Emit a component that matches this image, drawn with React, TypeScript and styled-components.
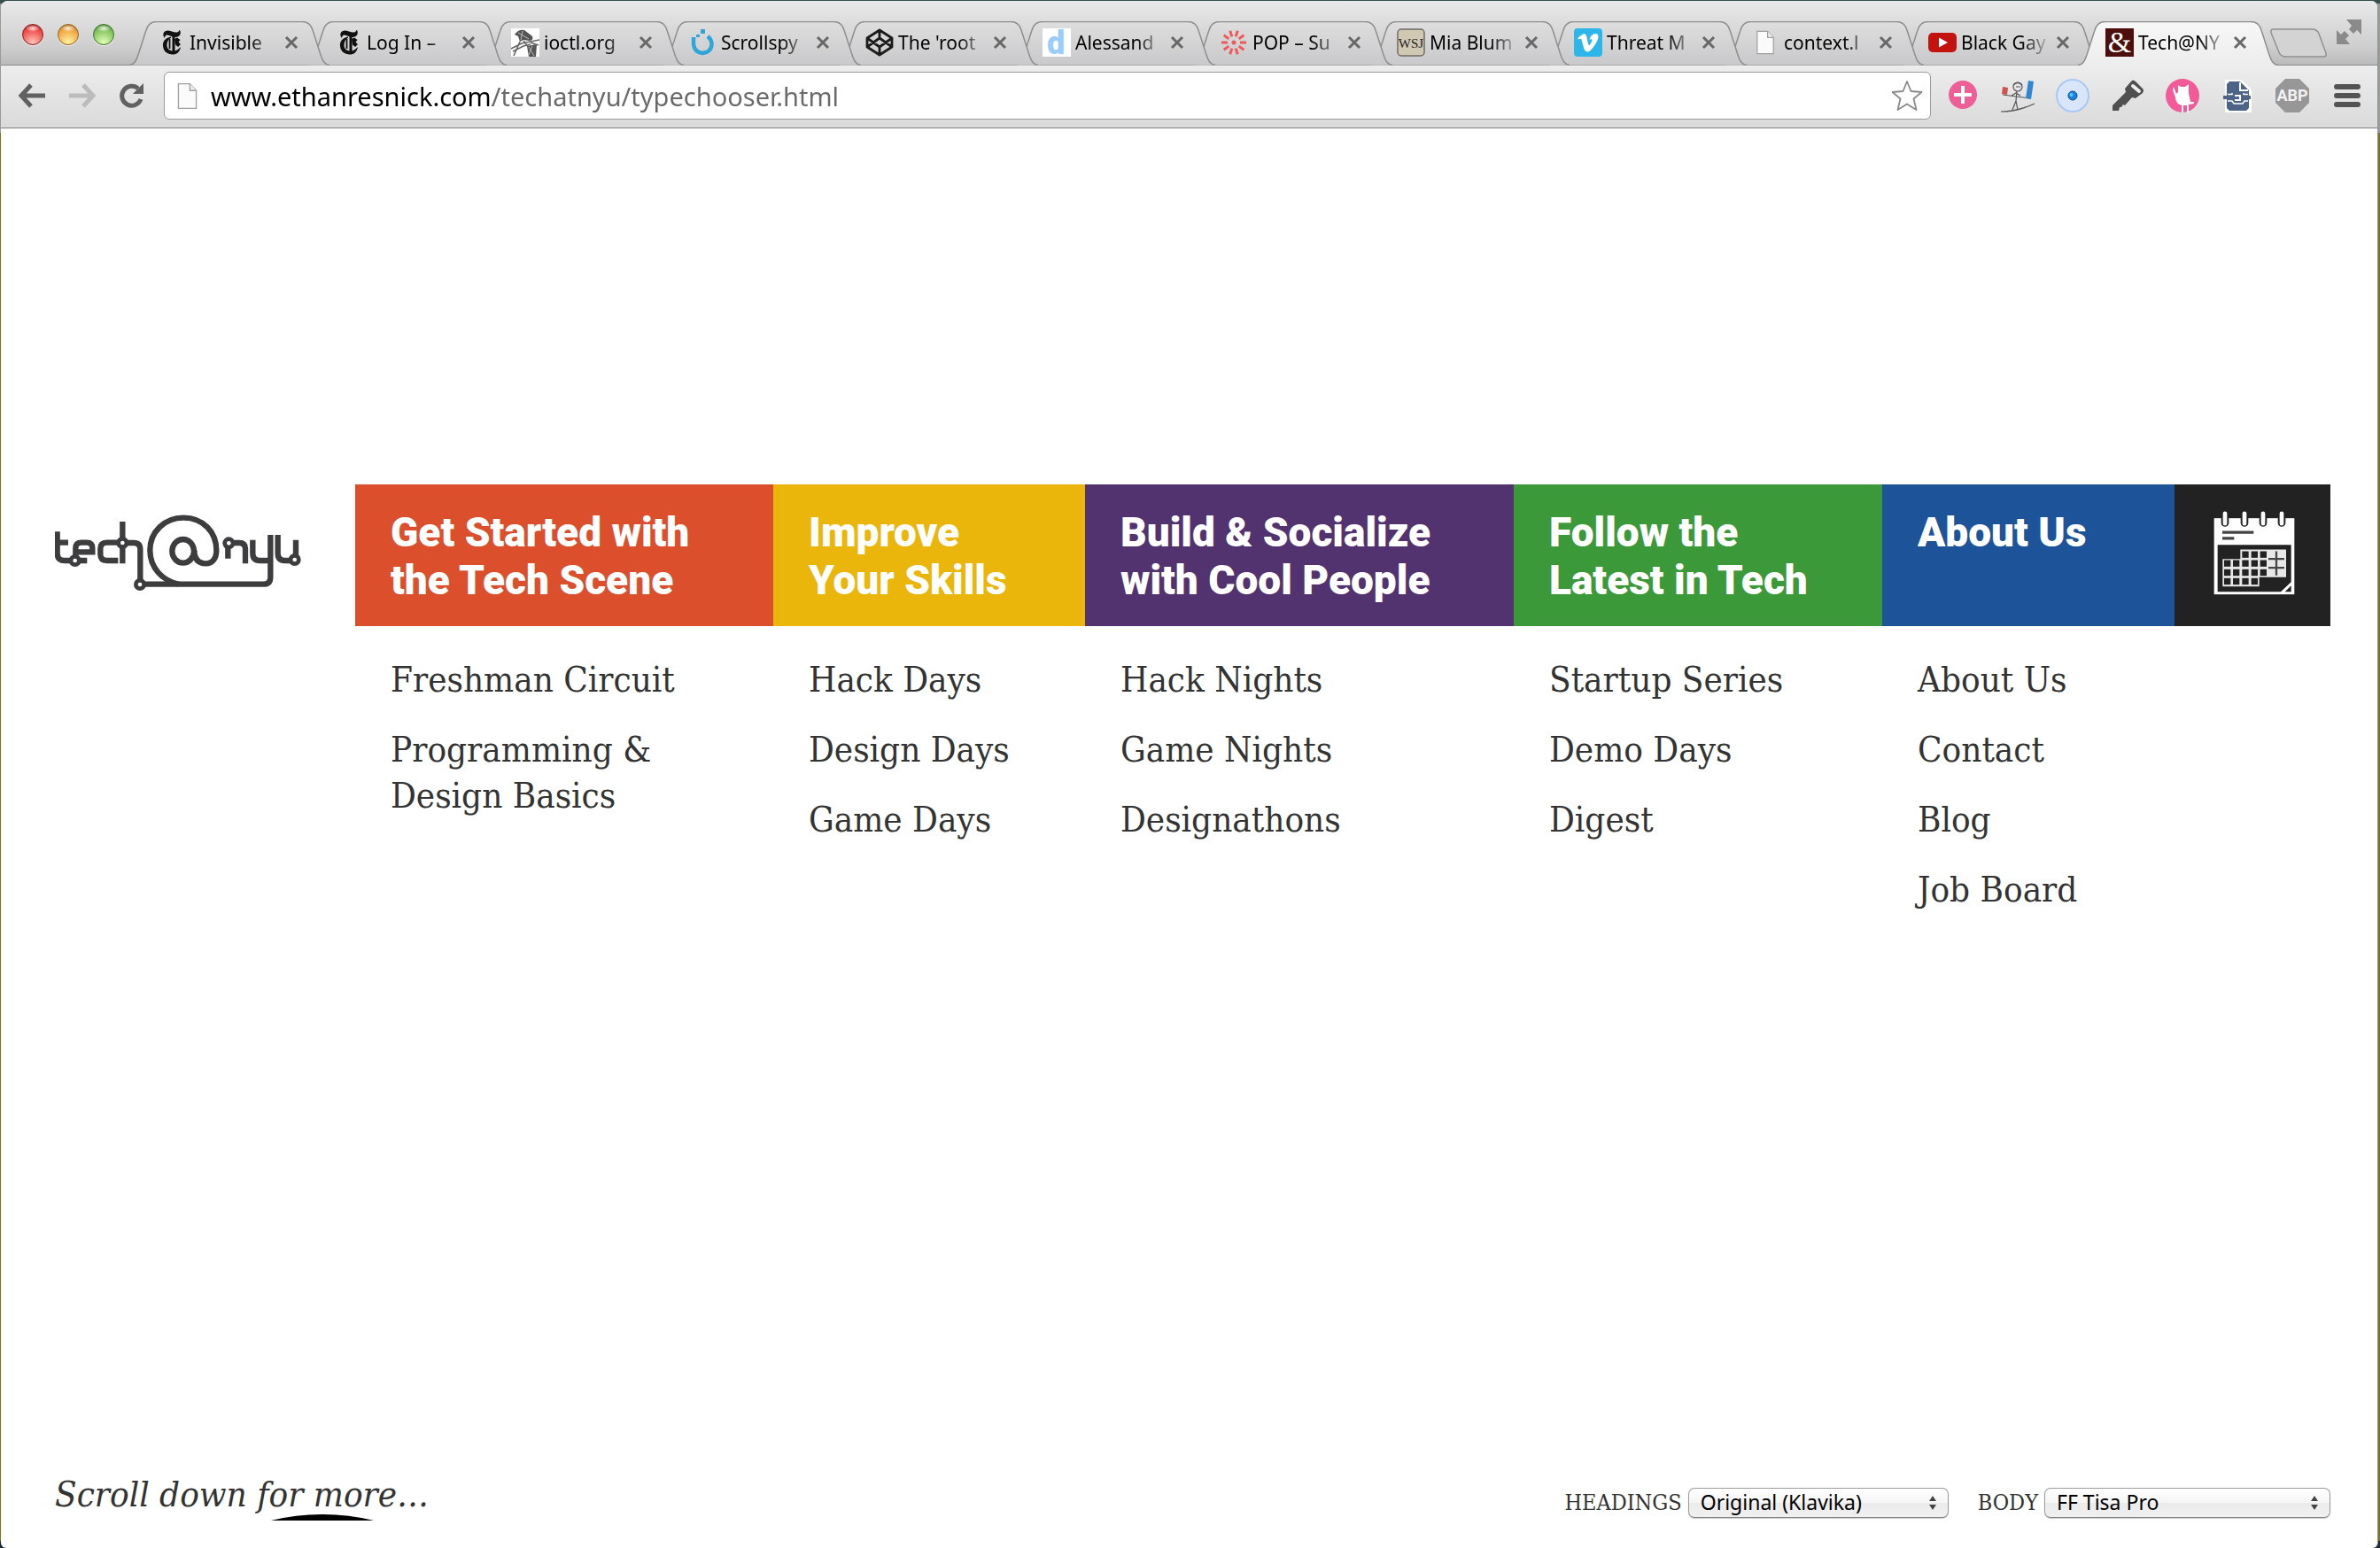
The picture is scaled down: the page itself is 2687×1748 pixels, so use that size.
import React, { useState } from 'react';
import styled, { createGlobalStyle, css } from 'styled-components';

const uiFont = '"Noto Sans", "Open Sans", sans-serif';
const slabFont = '"DejaVu Serif Condensed", "DejaVu Serif", serif';
const headingFont = 'Roboto, "Liberation Sans", sans-serif';

const GlobalStyle = createGlobalStyle`
  *, *::before, *::after { box-sizing: border-box; }
  body { margin: 0; background: #33504a; font-family: ${uiFont}; }
  button { padding: 0; border: 0; background: none; cursor: pointer; }
  ul { margin: 0; padding: 0; list-style: none; }
  svg { display: block; flex: none; }
`;

/* ---------- window frame ---------- */

const Desktop = styled.div`
  min-height: 100vh;
  display: flex;
  padding: 1px 2px 0 1px;
  background: linear-gradient(#33504a 0 4px, #9a9a98 4px 150px, #7c7414 150px 1740px, #1c2a3a 1740px);
`;

const BrowserWindow = styled.div`
  flex: 1;
  min-width: 0;
  display: flex;
  flex-direction: column;
  background: #fff;
  border-right: 1px solid #8d9694;
  border-radius: 8px 8px 6px 6px;
  overflow: hidden;
`;

const TabStrip = styled.div`
  display: flex;
  align-items: flex-end;
  height: 73px;
  padding: 0 18px 0 24px;
  background: linear-gradient(#e9e9e9, #cfcfcf 70%, #bababa);
  box-shadow: inset 0 -1px 0 #8c8c8c;
`;

const Lights = styled.div`
  display: flex;
  gap: 16px;
  width: 121px;
  height: 49px;
  flex: none;
`;

const Light = styled.button<{ $rim: string; $mid: string; $glow: string }>`
  width: 24px;
  height: 24px;
  margin-top: 2px;
  border: 1px solid ${(p) => p.$rim};
  border-radius: 50%;
  background:
    radial-gradient(ellipse 8px 4px at 50% 18%, rgba(255, 255, 255, 0.85), rgba(255, 255, 255, 0)),
    radial-gradient(circle at 50% 90%, ${(p) => p.$glow}, ${(p) => p.$mid} 65%, ${(p) => p.$rim});
  box-shadow: 0 1px 1px rgba(255, 255, 255, 0.7);
`;

const TabList = styled.div`
  display: flex;
  flex: 1;
  min-width: 0;
  align-items: flex-end;
`;

const TabBox = styled.div<{ $order: number }>`
  position: relative;
  z-index: ${(p) => p.$order};
  flex: none;
  display: flex;
  align-items: center;
  width: 226px;
  height: 50px;
  margin-right: -26px;
  padding: 0 35px 2px 31px;
`;

const TabShape = styled.svg`
  position: absolute;
  inset: 0;
`;

const TabLink = styled.a`
  position: relative;
  display: flex;
  align-items: center;
  gap: 5px;
  flex: 1;
  min-width: 0;
  color: #000;
  text-decoration: none;
`;

const TabTitle = styled.span`
  flex: 1;
  min-width: 0;
  overflow: hidden;
  white-space: nowrap;
  font-size: 21px;
  line-height: 32px;
  mask-image: linear-gradient(90deg, #000 70%, rgba(0, 0, 0, 0.15) 100%);
`;

const CloseTab = styled.button`
  position: relative;
  width: 16px;
  height: 16px;
  margin-left: 10px;
`;

const NewTab = styled.button`
  align-self: flex-start;
  margin: 8px 0 0 16px;
`;

const FullScreen = styled.button`
  align-self: flex-start;
  margin-top: 21px;
`;

const Toolbar = styled.div`
  display: flex;
  align-items: center;
  height: 71px;
  padding: 0 14px 2px 19px;
  background: linear-gradient(#ededed, #dadada);
  border-bottom: 1px solid #808080;
`;

const NavButtons = styled.div`
  display: flex;
  gap: 25px;
  width: 165px;
  flex: none;
`;

const Omnibox = styled.div`
  flex: 1;
  min-width: 0;
  display: flex;
  align-items: center;
  gap: 15px;
  height: 54px;
  padding: 0 8px 0 14px;
  background: #fff;
  border: 1px solid #9c9c9c;
  border-radius: 6px;
`;

const Address = styled.input`
  flex: 1;
  min-width: 0;
  height: 44px;
  padding: 0;
  border: 0;
  outline: 0;
  font-family: ${uiFont};
  font-size: 29px;
  color: transparent;
  caret-color: #000;
  background: linear-gradient(90deg, #000 0 318px, #696969 318px);
  background-clip: text;
`;

const Extensions = styled.div`
  display: flex;
  gap: 22px;
  margin-left: 16px;
`;

const IconButton = styled.button`
  display: flex;
  align-items: center;
  justify-content: center;
  width: 40px;
  height: 40px;
`;

/* ---------- page ---------- */

const Page = styled.div`
  flex: 1;
  display: flex;
  flex-direction: column;
  padding: 402px 53px 31px 61px;
  color: #333;
  font-family: ${slabFont};
`;

const SiteHeader = styled.header`
  display: flex;
  align-items: flex-start;
`;

const LogoLink = styled.a`
  width: 339px;
  padding-top: 32px;
  flex: none;
`;

const Menu = styled.nav`
  flex: 1;
  min-width: 0;
  display: grid;
  grid-template-columns: 472fr 352fr 484fr 416fr 330fr 176fr;
`;

const headerCell = css<{ $color: string }>`
  height: 160px;
  background: ${(p) => p.$color};
`;

const Heading = styled.h2<{ $color: string }>`
  ${headerCell}
  margin: 0 0 34px;
  padding: 27px 40px 0;
  color: #fff;
  font-family: ${headingFont};
  font-size: 46px;
  font-weight: 900;
  line-height: 54px;
  white-space: pre;
`;

const CalendarLink = styled.a<{ $color: string }>`
  ${headerCell}
  display: flex;
  align-items: flex-start;
  justify-content: center;
  padding: 30px 0 0 4px;
`;

const Links = styled.ul`
  display: flex;
  flex-direction: column;
  gap: 27px;
  padding: 0 0 0 40px;
`;

const MenuLink = styled.a`
  display: block;
  color: #333;
  font-size: 40px;
  line-height: 52px;
  text-decoration: none;
  white-space: pre-line;
`;

const Footer = styled.footer`
  display: flex;
  align-items: flex-end;
  justify-content: space-between;
  margin-top: auto;
`;

const ScrollLink = styled.a`
  position: relative;
  margin-bottom: 4px;
  color: #333;
  font-size: 40px;
  font-style: italic;
  line-height: 52px;
  text-decoration: none;
`;

const ScrollArc = styled.svg`
  position: absolute;
  left: 244px;
  bottom: -4px;
`;

const Choosers = styled.form`
  display: flex;
  gap: 33px;
  padding-bottom: 3px;
`;

const Chooser = styled.div`
  display: flex;
  align-items: center;
  gap: 7px;
`;

const ChooserLabel = styled.label`
  font-size: 25px;
  line-height: 34px;
`;

const SelectWrap = styled.div<{ $width: number }>`
  position: relative;
  width: ${(p) => p.$width}px;
`;

const Select = styled.select`
  appearance: none;
  display: block;
  width: 100%;
  height: 34px;
  padding: 0 40px 2px 13px;
  border: 1px solid #9a9a9a;
  border-bottom-color: #808080;
  border-radius: 7px;
  background: linear-gradient(#fff, #f5f5f5 50%, #ebebeb 50%, #f0f0f0);
  box-shadow: 0 1px 1px rgba(0, 0, 0, 0.2);
  color: #000;
  font-family: ${uiFont};
  font-size: 23px;
  line-height: 30px;
`;

const SelectArrows = styled.svg`
  position: absolute;
  top: 9px;
  right: 13px;
  pointer-events: none;
`;

/* ---------- favicons ---------- */

const Fav = ({ children }: { children: React.ReactNode }) => (
  <svg width="32" height="32" viewBox="0 0 32 32" aria-hidden="true">
    {children}
  </svg>
);

const TimesIcon = () => (
  <Fav>
    <g fill="#111">
      <path d="M9 11 C6 8 7 3 12 2.500 C16 2.500 19 5 23 4.500 C25 4 25 2 26 2 C28 6 26 10 21 10 C17 10 14 7 11 7.500 C10 8 9 9 9 11 Z" />
      <path d="M16 9.500 C9 11 6.500 15 7 20 C7.500 26 12 29.500 18 29.500 C22.500 29.500 26 27 27 21 C24 24 22 25.500 19 25.500 C14 25.500 11.500 23 11.500 19 C11.500 15 13 12 16 11 Z" />
      <path d="M20 12 L23 10.500 L26.500 13 L24.500 15.500 L27 18 L24 21 L21 18.500 Z" />
    </g>
    <path d="M19 9 V27" stroke="#111" strokeWidth="3" />
    <path d="M14.500 12 V23" stroke="#111" strokeWidth="1.800" />
  </Fav>
);

const SketchIcon = () => (
  <Fav>
    <rect width="32" height="32" fill="#fff" />
    <path d="M4 7 Q8 1 15 2 L24 9 Q26 14 20 14 L14 13 L10 15 L8 9 Z" fill="#555" />
    <path d="M18 20 L29 18 L28 32 H20 Z" fill="#555" />
    <path d="M0 23 L12 17 L32 13 M2 26 L14 20 L22 18 M10 15 L3 31 M14 14 L20 22 M22 16 L31 19" fill="none" stroke="#666" strokeWidth="1.600" />
    <path d="M20 21 L26 31 M24 20 L20 30 M8 5 L20 12 M13 3 L11 13" stroke="#bbb" strokeWidth="1" />
  </Fav>
);

const SpyIcon = () => (
  <Fav>
    <path d="M6 10 V18 Q7 27 16 28 Q26 27 26.500 18 Q26.500 13 22 9" fill="none" stroke="#2fa5d9" strokeWidth="4.500" />
    <path d="M14 1 h5 v5 h-5 z M9 7 h4 v3 h-4 z" fill="#2fa5d9" />
  </Fav>
);

const CodepenIcon = () => (
  <Fav>
    <path
      d="M16 2 L30 11 V21 L16 30 L2 21 V11 Z M16 2 V11 M16 21 V30 M2 11 L16 21 L30 11 M2 21 L16 11 L30 21"
      fill="none"
      stroke="#1b1b1b"
      strokeWidth="2.800"
      strokeLinejoin="round"
    />
  </Fav>
);

const LetterIcon = () => (
  <Fav>
    <rect width="32" height="32" fill="#fff" />
    <text x="15" y="29" textAnchor="middle" fontFamily="Roboto, sans-serif" fontWeight="900" fontSize="36" fill="#9accff">d</text>
  </Fav>
);

const BurstIcon = () => (
  <Fav>
    <g stroke="#ee5a5a" strokeWidth="3">
      {[0, 36, 72, 108, 144, 180, 216, 252, 288, 324].map((angle) => (
        <path key={angle} d="M16 2 V9" transform={`rotate(${angle + 18} 16 16)`} />
      ))}
    </g>
    <circle cx="16" cy="16" r="2.500" fill="#ee5a5a" />
  </Fav>
);

const WsjIcon = () => (
  <Fav>
    <rect x="1" y="1" width="30" height="30" rx="4" fill="#d1c8b4" stroke="#6f6a60" strokeWidth="1.500" />
    <text x="16" y="22" textAnchor="middle" fontFamily="Liberation Serif, serif" fontSize="15" fill="#222">WSJ</text>
  </Fav>
);

const VimeoIcon = () => (
  <Fav>
    <rect width="32" height="32" rx="4" fill="#2cb6ea" />
    <path d="M4 11 L10 6.500 Q13.500 5 14.500 10 Q16 19 17 19 Q18.500 19 20.500 13.500 Q20.500 11.500 17.500 12.500 Q19.500 5.500 25 6 Q29 7 26.500 13.500 Q23 21 18 25.500 Q13 28.500 11 22 L8.500 13 Q8 11 5.500 12.500 Z" fill="#fff" />
  </Fav>
);

const FileIcon = ({ width = 32, height = 32 }: { width?: number; height?: number }) => (
  <svg width={width} height={height} viewBox="0 0 24 32" aria-hidden="true">
    <path d="M1.500 1.500 H15 L22.500 9.500 V30.500 H1.500 Z" fill="#fbfbfb" stroke="#a0a0a0" strokeWidth="1.400" />
    <path d="M15 1.500 V9.500 H22.500" fill="#eee" stroke="#a0a0a0" strokeWidth="1.400" />
  </svg>
);

const YouTubeIcon = () => (
  <Fav>
    <rect y="5" width="32" height="22" rx="5" fill="#c4120e" />
    <path d="M12 10.500 L22 16 L12 21.500 Z" fill="#fff" />
  </Fav>
);

const AmpIcon = () => (
  <Fav>
    <rect width="32" height="32" fill="#4c0f0b" />
    <text x="16" y="27" textAnchor="middle" fontFamily="Liberation Serif, serif" fontSize="34" fill="#fff">&amp;</text>
  </Fav>
);

const tabs = [
  { title: 'Invisible', icon: <TimesIcon /> },
  { title: 'Log In –', icon: <TimesIcon /> },
  { title: 'ioctl.org', icon: <SketchIcon /> },
  { title: 'Scrollspy', icon: <SpyIcon /> },
  { title: "The 'root", icon: <CodepenIcon /> },
  { title: 'Alessand', icon: <LetterIcon /> },
  { title: 'POP – Su', icon: <BurstIcon /> },
  { title: 'Mia Blum', icon: <WsjIcon /> },
  { title: 'Threat M', icon: <VimeoIcon /> },
  { title: 'context.l', icon: <FileIcon height={28} /> },
  { title: 'Black Gay', icon: <YouTubeIcon /> },
  { title: 'Tech@NY', icon: <AmpIcon />, active: true },
];

const TAB_EDGE = 'M0 49.500 C6 49 8 44 10 38 L19 10 C21 3 25 0.500 31 0.500 H195 C201 0.500 205 3 207 10 L216 38 C218 44 220 49 226 49.500';

const Tab = ({ title, icon, active, order }: { title: string; icon: React.ReactNode; active?: boolean; order: number }) => (
  <TabBox $order={order}>
    <TabShape width="226" height="50" viewBox="0 0 226 50" aria-hidden="true">
      <defs>
        <linearGradient id={active ? 'tab-on' : 'tab-off'} x1="0" y1="0" x2="0" y2="1">
          <stop offset="0" stopColor={active ? '#f7f7f7' : '#dededf'} />
          <stop offset="1" stopColor={active ? '#ededed' : '#c9c9cb'} />
        </linearGradient>
      </defs>
      <path d={`${TAB_EDGE} ${active ? 'V50 H0' : ''} Z`} fill={active ? 'url(#tab-on)' : 'url(#tab-off)'} />
      <path d={TAB_EDGE} fill="none" stroke="#8f8f8f" strokeWidth="1.500" />
    </TabShape>
    <TabLink href="#" aria-current={active ? 'page' : undefined}>
      {icon}
      <TabTitle>{title}</TabTitle>
    </TabLink>
    <CloseTab aria-label={`Close ${title}`}>
      <svg width="16" height="16" viewBox="0 0 16 16">
        <path d="M2 2 L14 14 M14 2 L2 14" stroke="#686868" strokeWidth="3" />
      </svg>
    </CloseTab>
  </TabBox>
);

/* ---------- toolbar icons ---------- */

const BackArrow = ({ color }: { color: string }) => (
  <svg width="32" height="30" viewBox="0 0 32 30">
    <path d="M15 3 L4 15 L15 27 M4 15 H31" fill="none" stroke={color} strokeWidth="5" />
  </svg>
);

const ForwardArrow = ({ color }: { color: string }) => (
  <svg width="32" height="30" viewBox="0 0 32 30">
    <path d="M17 3 L28 15 L17 27 M1 15 H28" fill="none" stroke={color} strokeWidth="5" />
  </svg>
);

const ReloadArrow = () => (
  <svg width="30" height="30" viewBox="0 0 30 30">
    <path d="M22 7 A11 11 0 1 0 25 19" fill="none" stroke="#616161" strokeWidth="5" />
    <path d="M28 1 V13 H16 Z" fill="#616161" />
  </svg>
);

const StarIcon = () => (
  <svg width="36" height="36" viewBox="0 0 36 36">
    <path d="M18 2 L22.500 13 L34.500 14 L25.500 21.500 L28.500 34 L18 27.500 L7.500 34 L10.500 21.500 L1.500 14 L13.500 13 Z" fill="#fff" stroke="#8a8a8a" strokeWidth="1.800" strokeLinejoin="round" />
  </svg>
);

const Ext = ({ children }: { children: React.ReactNode }) => (
  <svg width="40" height="40" viewBox="0 0 40 40" aria-hidden="true">
    {children}
  </svg>
);

const extensions = [
  {
    name: 'Add',
    art: (
      <>
        <circle cx="20" cy="19" r="16" fill="#ee5f98" />
        <path d="M20 9 V29 M10 19 H30" stroke="#fff" strokeWidth="4" />
      </>
    ),
  },
  {
    name: 'Balance',
    art: (
      <>
        <g fill="none" stroke="#555" strokeWidth="1.200">
          <circle cx="20" cy="10" r="5" />
          <path d="M15 8 Q20 3 25 8 M18 10 H23 M19 15 L18 26 L14 36 M18 26 L20 36 M3 19 L34 23 M13 20 L18 17 L23 20" />
          <path d="M1 38 Q20 38 39 29" />
        </g>
        <path d="M3 10 L9 11 L8 19 L2 18 Z" fill="#cf5350" />
        <path d="M32 3 L38 4 L35 24 L29 23 Z" fill="#2f86d2" />
      </>
    ),
  },
  {
    name: 'Focus',
    art: (
      <>
        <circle cx="20" cy="20" r="18" fill="#d9e5f8" stroke="#a9c9f5" strokeWidth="2" />
        <circle cx="20" cy="20" r="5" fill="#1a84dd" stroke="#124a9c" />
        <circle cx="18.500" cy="19" r="2" fill="#5cc8ff" />
      </>
    ),
  },
  {
    name: 'Key',
    art: (
      <>
        <path d="M24 4 Q26 1 29 4 L37 12 Q39 14 37 17 L29 23 L25 22 L17 31 L15 30 L13 33 L11 33 L10 37 H3 V31 L18 16 L17 12 Z" fill="#505050" />
        <path d="M26 9 L33 15" stroke="#eee" strokeWidth="4" strokeLinecap="round" />
      </>
    ),
  },
  {
    name: 'Cat',
    art: (
      <>
        <circle cx="20" cy="20" r="19" fill="#f25a98" />
        <path d="M15 8 L18 10 H23 L27 7 V17 L29 27 H33 V29 L27 30 V39 H25 V31 H21 V39 H19 V31 Q12 29 12 22 L9 13 L10 10 L13 18 L15 16 Z" fill="#fff" />
      </>
    ),
  },
  {
    name: 'Archive',
    art: (
      <>
        <path d="M8 4 H24 L34 14 V37 H8 Z" fill="#fff" stroke="#fff" strokeWidth="4" />
        <path d="M8 7 L11 4 H23 L33 14 V20 H35 V24 H33 V34 L30 37 H11 L8 34 V24 H4 V20 H8 Z" fill="#4d6486" />
        <path d="M23 5 V14 H32" fill="none" stroke="#fff" strokeWidth="2" />
        <path d="M9 18.500 H14 V17 M27 17 V18.500 H32 M9 26 H14 L16 29 H26 L28 26 H32" fill="none" stroke="#fff" strokeWidth="1.500" />
        <path d="M17 20 H23 V25 H17" fill="none" stroke="#fff" strokeWidth="2" />
      </>
    ),
  },
  {
    name: 'Ad blocker',
    art: (
      <>
        <path d="M12 1 H28 L39 12 V28 L28 39 H12 L1 28 V12 Z" fill="#979797" />
        <text x="20" y="26" textAnchor="middle" fontFamily="Roboto, sans-serif" fontWeight="700" fontSize="18" fill="#f2f2f2">ABP</text>
      </>
    ),
  },
  {
    name: 'Menu',
    art: <path d="M8 10 H32 M8 20 H32 M8 30 H32" stroke="#545454" strokeWidth="6" strokeLinecap="round" />,
  },
];

/* ---------- page drawings ---------- */

const Node = ({ x, y }: { x: number; y: number }) => (
  <>
    <circle cx={x} cy={y} r="21" fill="#3d3d3f" stroke="none" />
    <circle cx={x} cy={y} r="7" fill="#fff" stroke="none" />
  </>
);

const Logo = () => (
  <svg width="278" height="89" viewBox="36 28 834 267" role="img" aria-label="tech@nyu">
    <g fill="none" stroke="#3d3d3f" strokeWidth="19">
      <path d="M44 92 V165 Q44 190 68 190 H145 M44 129 H81" />
      <path d="M106 185 V148 Q106 129 126 129 H144 Q163 129 163 148 V161 H106" />
      <path d="M250 129 H212 Q190 129 190 150 V169 Q190 190 212 190 H250" />
      <path d="M265 58 V200 M265 130 H303 Q325 130 325 152 V270" />
      <path d="M324 270 H742 Q766 270 766 246 V103" />
      <path d="M455 270 C400 258 358 215 358 155 C358 92 408 45 471 45 C540 45 583 95 583 155 C583 183 570 200 547 200 C518 200 508 182 508 155" />
      <ellipse cx="470" cy="158" rx="37" ry="40" />
      <path d="M622 130 V183 M640 130 H660 Q681 130 681 150 V200" />
      <path d="M706 120 V166 Q706 190 730 190 H762" />
      <path d="M791 103 V166 Q791 190 815 190 H848 M852 120 V187" />
    </g>
    <Node x={104} y={190} />
    <Node x={265} y={130} />
    <Node x={324} y={271} />
    <Node x={625} y={131} />
    <Node x={848} y={187} />
  </svg>
);

const Calendar = () => (
  <svg width="92" height="95" viewBox="132 50 276 284" aria-hidden="true">
    <rect x="134" y="74" width="272" height="258" fill="#fff" />
    <path d="M146 164 H395 V290 L360 323 H146 Z" fill="#222" />
    <path d="M395 302 V323 H374 Z" fill="#222" />
    <g stroke="#222" strokeWidth="26" strokeLinecap="round">
      <path d="M171 74 V90 M237 74 V90 M300 74 V90 M363 74 V90" />
    </g>
    <g stroke="#fff" strokeWidth="14" strokeLinecap="round">
      <path d="M171 58 V92 M237 58 V92 M300 58 V92 M363 58 V92" />
    </g>
    <path d="M162 122 H268 M162 142 H202" stroke="#444" strokeWidth="10" />
    <path d="M163 212 H223 V180 H378 V274 H287 V305 H163 Z" fill="#e8e8e8" />
    <g fill="#222">
      {[229, 260, 290].map((x) => (
        <rect key={x} x={x} y="186" width="22" height="22" />
      ))}
      {[216, 247].map((y) => [168, 198, 229, 260, 290].map((x) => <rect key={`${x}-${y}`} x={x} y={y} width="22" height="22" />))}
      {[168, 198, 229, 260].map((x) => (
        <rect key={x} x={x} y="277" width="22" height="22" />
      ))}
    </g>
    <path d="M345 186 V268 M318 212 H372 M318 242 H372" stroke="#444" strokeWidth="7" />
  </svg>
);

const columns = [
  { title: 'Get Started with\nthe Tech Scene', color: '#db4f2d', links: ['Freshman Circuit', 'Programming &\nDesign Basics'] },
  { title: 'Improve\nYour Skills', color: '#ebb60c', links: ['Hack Days', 'Design Days', 'Game Days'] },
  { title: 'Build & Socialize\nwith Cool People', color: '#533270', links: ['Hack Nights', 'Game Nights', 'Designathons'] },
  { title: 'Follow the\nLatest in Tech', color: '#3c993a', links: ['Startup Series', 'Demo Days', 'Digest'] },
  { title: 'About Us', color: '#1d5499', links: ['About Us', 'Contact', 'Blog', 'Job Board'] },
];

const FontChooser = ({ id, label, options, width }: { id: string; label: string; options: string[]; width: number }) => (
  <Chooser>
    <ChooserLabel htmlFor={id}>{label}</ChooserLabel>
    <SelectWrap $width={width}>
      <Select id={id} defaultValue={options[0]}>
        {options.map((option) => (
          <option key={option}>{option}</option>
        ))}
      </Select>
      <SelectArrows width="10" height="16" viewBox="0 0 10 16" aria-hidden="true">
        <path d="M5 0 L9 6 H1 Z M5 16 L9 10 H1 Z" fill="#444" />
      </SelectArrows>
    </SelectWrap>
  </Chooser>
);

export default function App() {
  const [address, setAddress] = useState('www.ethanresnick.com/techatnyu/typechooser.html');

  return (
    <Desktop>
      <GlobalStyle />
      <BrowserWindow>
        <TabStrip>
          <Lights>
            <Light aria-label="Close window" $rim="#8e1c1c" $mid="#ee4b47" $glow="#ffc2b8" />
            <Light aria-label="Minimize window" $rim="#94601c" $mid="#f0a541" $glow="#fff3a0" />
            <Light aria-label="Zoom window" $rim="#3f7324" $mid="#80c25c" $glow="#e2ffb8" />
          </Lights>
          <TabList>
            {tabs.map((tab, index) => (
              <Tab key={tab.title} {...tab} order={tab.active ? tabs.length + 1 : tabs.length - index} />
            ))}
            <NewTab aria-label="New tab">
              <svg width="66" height="34" viewBox="0 0 66 34">
                <path d="M5 1 H48 Q54 1 56 6 L64 28 Q65 32 61 32 H19 Q13 32 11 27 L2 5 Q1 1 5 1 Z" fill="#d3d3d4" stroke="#919191" strokeWidth="1.500" />
              </svg>
            </NewTab>
          </TabList>
          <FullScreen aria-label="Full screen">
            <svg width="28" height="29" viewBox="0 0 28 29">
              <path d="M11 0 H28 V17 L23 12 L19 16 L14 11 L17 7 Z M0 12 L5 17 L9 13 L14 18 L10 22 L15 28 H0 Z" fill="#8a8a8a" />
            </svg>
          </FullScreen>
        </TabStrip>

        <Toolbar>
          <NavButtons>
            <button aria-label="Back">
              <BackArrow color="#616161" />
            </button>
            <button aria-label="Forward">
              <ForwardArrow color="#bcbcbc" />
            </button>
            <button aria-label="Reload">
              <ReloadArrow />
            </button>
          </NavButtons>
          <Omnibox>
            <FileIcon width={23} height={31} />
            <Address aria-label="Address" value={address} onChange={(event) => setAddress(event.target.value)} />
            <button aria-label="Bookmark this page">
              <StarIcon />
            </button>
          </Omnibox>
          <Extensions>
            {extensions.map(({ name, art }) => (
              <IconButton key={name} aria-label={name}>
                <Ext>{art}</Ext>
              </IconButton>
            ))}
          </Extensions>
        </Toolbar>

        <Page>
          <SiteHeader>
            <LogoLink href="#">
              <Logo />
            </LogoLink>
            <Menu>
              {columns.map((column) => (
                <section key={column.title}>
                  <Heading $color={column.color}>{column.title}</Heading>
                  <Links>
                    {column.links.map((link) => (
                      <li key={link}>
                        <MenuLink href="#">{link}</MenuLink>
                      </li>
                    ))}
                  </Links>
                </section>
              ))}
              <CalendarLink href="#" aria-label="Calendar" $color="#222">
                <Calendar />
              </CalendarLink>
            </Menu>
          </SiteHeader>

          <Footer>
            <ScrollLink href="#">
              Scroll down for more…
              <ScrollArc width="116" height="7" viewBox="0 0 116 7" aria-hidden="true">
                <path d="M0 7 Q28 0 58 0 Q88 0 116 7 Z" fill="#000" />
              </ScrollArc>
            </ScrollLink>
            <Choosers>
              <FontChooser id="headings-font" label="HEADINGS" width={294} options={['Original (Klavika)']} />
              <FontChooser id="body-font" label="BODY" width={323} options={['FF Tisa Pro']} />
            </Choosers>
          </Footer>
        </Page>
      </BrowserWindow>
    </Desktop>
  );
}
